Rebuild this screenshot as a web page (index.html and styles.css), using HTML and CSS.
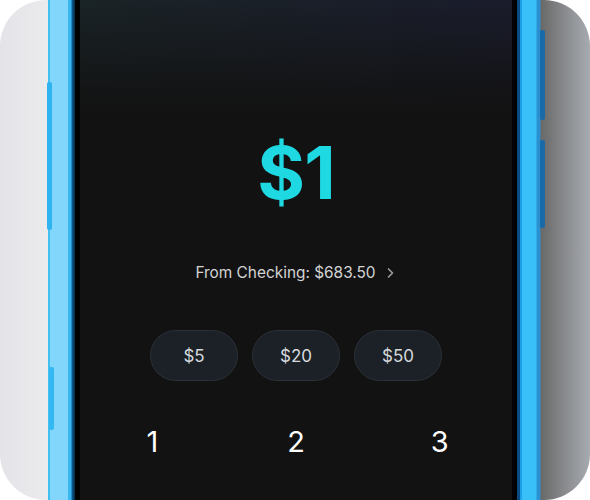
FILE: index.html
```html
<!DOCTYPE html>
<html>
<head>
<meta charset="utf-8">
<link rel="stylesheet" href="styles.css">
</head>
<body>
<div class="frame">
  <div class="gutter-left"></div>
  <div class="phone">
    <div class="bezel-left"></div>
    <div class="screen">
      <div class="amount">$1</div>
      <div class="source">
        <span>From Checking: $683.50</span>
        <svg class="chev" width="9" height="12" viewBox="0 0 9 12"><path d="M2.5 2 L6.5 6 L2.5 10" fill="none" stroke="#9a9a9a" stroke-width="1.7" stroke-linecap="round" stroke-linejoin="round"/></svg>
      </div>
      <div class="presets">
        <div class="pill">$5</div>
        <div class="pill">$20</div>
        <div class="pill">$50</div>
      </div>
      <div class="keypad">
        <div class="key">1</div>
        <div class="key">2</div>
        <div class="key">3</div>
      </div>
    </div>
    <div class="bezel-right"></div>
    <div class="btn btn-l1"></div>
    <div class="btn btn-l2"></div>
    <div class="btn btn-r1"></div>
    <div class="btn btn-r2"></div>
  </div>
  <div class="gutter-right"></div>
</div>
</body>
</html>
```
FILE: styles.css
```css
html, body {
  margin: 0;
  padding: 0;
  background: #ffffff;
}
.frame {
  width: 590px;
  height: 500px;
  border-radius: 46px;
  overflow: hidden;
  display: flex;
  font-family: Inter, "Noto Sans", sans-serif;
}
.gutter-left {
  width: 48px;
  background: linear-gradient(90deg, #e4e4e8, #ebebee);
}
.gutter-right {
  width: 48px;
  background: linear-gradient(90deg, #6a6a6a, #8a8c8f 50%, #a7abb1);
}
.phone {
  position: relative;
  display: flex;
  width: 494px;
}
.bezel-left {
  width: 32px;
  background: linear-gradient(90deg,
    #40bff0 0, #40bff0 2px,
    #82d6fb 2px, #82d6fb 20px,
    #3ab6ee 20px, #3ab6ee 23px,
    #0b5d94 24px, #062a44 27px,
    #000000 27px, #000000 32px);
}
.bezel-right {
  width: 30px;
  background: linear-gradient(90deg,
    #000000 0, #000000 5px,
    #0a4a80 5px, #0a4a80 8px,
    #1ea0e8 8px, #1ea0e8 10px,
    #3ac0f8 10px, #3ac0f8 24px,
    #2a90d0 25px, #2a90d0 28px,
    #6a6a6a 29px, #6a6a6a 30px);
}
.btn {
  position: absolute;
  width: 5px;
  border-radius: 2px;
}
.btn-l1 { left: -1px; top: 82px; height: 148px; background: #30b4f0; }
.btn-l2 { left: 1px; top: 367px; height: 63px; background: #34b8f2; }
.btn-r1 { right: -3px; top: 30px; height: 90px; background: #1a6aa8; }
.btn-r2 { right: -3px; top: 140px; height: 88px; background: #1a6aa8; }
.screen {
  width: 432px;
  background:
    linear-gradient(180deg, rgba(18,18,18,0) 0, #121212 110px),
    linear-gradient(90deg, #1a2326, #1a1c2c);
  display: flex;
  flex-direction: column;
  align-items: center;
  padding-top: 137px;
  box-sizing: border-box;
}
.amount {
  color: #1ed8e2;
  font-size: 73px;
  font-weight: 700;
  line-height: 72px;
  letter-spacing: -1px;
}
.source {
  margin-top: 54px;
  display: flex;
  align-items: center;
  gap: 10px;
  color: #d2d4d6;
  font-size: 15.4px;
  line-height: 20px;
  padding-right: 2px;
}
.chev {
  display: block;
}
.presets {
  margin-top: 47px;
  display: flex;
  gap: 14px;
}
.pill {
  width: 88px;
  height: 51px;
  box-sizing: border-box;
  border-radius: 26px;
  background: #1b2127;
  border: 1px solid #2a3138;
  color: #d6dadd;
  font-size: 17px;
  display: flex;
  align-items: center;
  justify-content: center;
}
.keypad {
  margin-top: 44px;
  width: 431px;
  display: grid;
  grid-template-columns: 1fr 1fr 1fr;
}
.key {
  color: #ffffff;
  font-size: 29px;
  line-height: 34px;
  text-align: center;
}
```
